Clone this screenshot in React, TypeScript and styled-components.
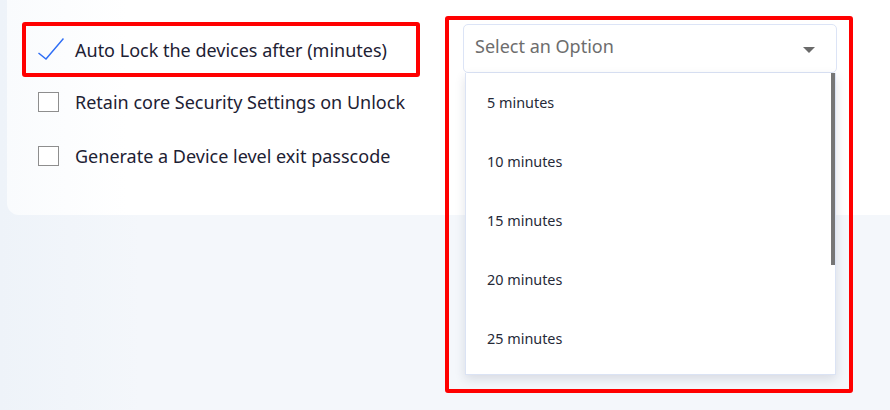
import React from 'react';
import styled, {createGlobalStyle} from 'styled-components';

const GlobalStyle = createGlobalStyle`
  html, body {
    margin: 0;
    padding: 0;
    background: #f4f7fb;
    font-family: 'Noto Sans', 'Lato', sans-serif;
  }
  * { box-sizing: border-box; }
`;

const Page = styled.div`
  width: 890px;
  height: 410px;
  overflow: hidden;
  background: linear-gradient(90deg, #eef3f9 0px, #f4f7fb 140px);
`;

const Card = styled.div`
  margin-left: 7px;
  height: 215px;
  background: linear-gradient(90deg, #f9fbfd 0px, #ffffff 120px);
  border-radius: 0 0 0 12px;
  display: flex;
  align-items: flex-start;
  padding: 16px 0 0 15px;
`;

const SettingsList = styled.div`
  margin-top: 6px;
  width: 398px;
  display: flex;
  flex-direction: column;
`;

const Highlight = styled.div`
  border: 4px solid #ff0000;
  border-radius: 3px;
`;

const Row = styled.label<{$h?: number}>`
  height: ${(p) => p.$h ?? 54}px;
  display: flex;
  align-items: center;
  padding-left: 16px;
  color: #1d2133;
  font-size: 18px;
  cursor: pointer;
`;

const FirstRow = styled(Row)`
  padding-left: 12px;
`;

const Box = styled.span`
  width: 21px;
  height: 20px;
  border: 1px solid #8e8e8e;
  background: #fff;
  flex-shrink: 0;
  margin-right: 16px;
`;

const Check = styled.svg`
  width: 26px;
  height: 22px;
  flex-shrink: 0;
  margin-right: 11px;
  margin-top: -2px;
`;

const SelectFrame = styled.div`
  margin-left: 25px;
  width: 408px;
  border: 4px solid #ff0000;
  border-radius: 3px;
  padding: 4px 12px 14px 14px;
  display: flex;
  flex-direction: column;
`;

const SelectBox = styled.div`
  height: 49px;
  border: 1px solid #dce4f6;
  border-radius: 5px;
  display: flex;
  align-items: center;
  justify-content: space-between;
  padding: 0 21px 0 11px;
  background: #fff;
`;

const Placeholder = styled.span`
  color: #6d6d6d;
  font-size: 18px;
  margin-top: -5px;
`;

const Caret = styled.span`
  width: 0;
  height: 0;
  border-left: 6px solid transparent;
  border-right: 6px solid transparent;
  border-top: 6px solid #6a6a6a;
  margin-top: 2px;
`;

const Menu = styled.div`
  position: relative;
  margin: 0 1px 0 2px;
  height: 302px;
  background: #fff;
  border: 1px solid #dbe3f4;
  border-top: none;
  box-shadow: 0 4px 10px rgba(40, 50, 80, 0.14);
  overflow: hidden;
`;

const Option = styled.div`
  height: 59px;
  display: flex;
  align-items: center;
  padding-left: 21px;
  font-size: 14.4px;
  color: #262a38;
`;

const ScrollThumb = styled.div`
  position: absolute;
  top: 0;
  right: 0;
  width: 4px;
  height: 192px;
  background: #767676;
`;

const options = [5, 10, 15, 20, 25];

export default function App() {
  return (
    <>
      <GlobalStyle />
      <Page>
        <Card>
          <SettingsList>
            <Highlight>
              <FirstRow $h={47}>
                <Check viewBox="0 0 26 22">
                  <polyline
                    points="0.5,15 8,21 25.5,0.5"
                    fill="none"
                    stroke="#2f6ef5"
                    strokeWidth="1.5"
                  />
                </Check>
                Auto Lock the devices after (minutes)
              </FirstRow>
            </Highlight>
            <Row style={{marginTop: -2}}>
              <Box />
              Retain core Security Settings on Unlock
            </Row>
            <Row>
              <Box />
              Generate a Device level exit passcode
            </Row>
          </SettingsList>
          <SelectFrame>
            <SelectBox>
              <Placeholder>Select an Option</Placeholder>
              <Caret />
            </SelectBox>
            <Menu>
              {options.map((m) => (
                <Option key={m}>{m} minutes</Option>
              ))}
              <ScrollThumb />
            </Menu>
          </SelectFrame>
        </Card>
      </Page>
    </>
  );
}
